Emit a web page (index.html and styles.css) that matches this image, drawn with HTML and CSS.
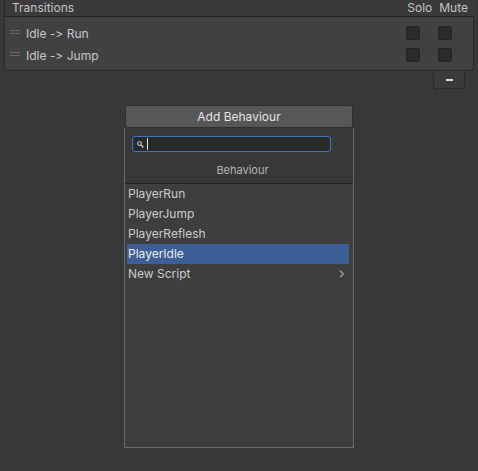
FILE: index.html
```html
<!DOCTYPE html>
<html>
<head>
<meta charset="utf-8">
<link rel="stylesheet" href="styles.css">
</head>
<body>
<div class="transitions">
  <div class="t-header">
    <span class="t-title">Transitions</span>
    <span class="t-cols"><span class="c-solo">Solo</span><span class="c-mute">Mute</span></span>
  </div>
  <div class="t-body">
    <div class="t-row">
      <span class="handle"></span>
      <span class="t-label">Idle -&gt; Run</span>
      <span class="chk"></span><span class="chk"></span>
    </div>
    <div class="t-row">
      <span class="handle"></span>
      <span class="t-label">Idle -&gt; Jump</span>
      <span class="chk"></span><span class="chk"></span>
    </div>
  </div>
  <div class="t-foot">
    <div class="minus-tab"><span class="minus"></span></div>
  </div>
</div>

<div class="add-area">
  <div class="add-btn">Add Behaviour</div>
  <div class="popup">
    <div class="popup-head">
      <div class="search">
        <svg class="mag" width="7" height="7" viewBox="0 0 7 7"><circle cx="2.6" cy="2.6" r="1.9" fill="none" stroke="#c8c8c8" stroke-width="1.1"/><path d="M4 4 L6.4 6.4" stroke="#c8c8c8" stroke-width="1.4"/></svg>
        <span class="caret"></span>
      </div>
      <div class="popup-title">Behaviour</div>
    </div>
    <div class="popup-list">
      <div class="item">PlayerRun</div>
      <div class="item">PlayerJump</div>
      <div class="item">PlayerReflesh</div>
      <div class="item selected">PlayerIdle</div>
      <div class="item sub">New Script<svg class="arrow" width="6" height="8" viewBox="0 0 6 8"><path d="M1 0.8 L4.4 4 L1 7.2" fill="none" stroke="#9a9a9a" stroke-width="1.4"/></svg></div>
    </div>
  </div>
</div>
</body>
</html>
```

FILE: styles.css
```css
html, body {
  margin: 0;
  padding: 0;
  background: #383838;
  font-family: Inter, "Noto Sans", "Liberation Sans", sans-serif;
  font-size: 12px;
  color: #d2d2d2;
  font-feature-settings: "calt" 0, "liga" 0;
  font-variant-ligatures: none;
}
.transitions {
  margin: 0 4px 0 4px;
  width: 470px;
}
.t-header {
  height: 16px;
  border-left: 1px solid #2a2a2a;
  border-bottom: 1px solid #232323;
  display: flex;
  align-items: center;
  justify-content: space-between;
  padding: 0 6px 0 7px;
  background: #3a3a3a;
  box-sizing: content-box;
}
.t-title { color: #c4c4c4; line-height: 16px; }
.t-cols { display: flex; gap: 7px; color: #c4c4c4; line-height: 16px; }
.t-body {
  background: #414141;
  border: 1px solid #2a2a2a;
  border-top: none;
  border-radius: 0 0 3px 3px;
  padding-top: 5px;
  box-sizing: border-box;
  height: 54px;
}
.t-row {
  height: 22px;
  display: flex;
  align-items: center;
  padding-left: 5px;
}
.handle {
  width: 10px;
  height: 4px;
  border-top: 1px solid #6a6a6a;
  border-bottom: 1px solid #6a6a6a;
  box-sizing: border-box;
  margin-top: -3px;
}
.t-label {
  margin-left: 6px;
  flex: 1;
  color: #c8c8c8;
}
.chk {
  width: 14px;
  height: 14px;
  box-sizing: border-box;
  background: #2b2b2b;
  border: 1px solid #212121;
  border-radius: 2px;
  margin-right: 18px;
}
.chk + .chk { margin-right: 21px; }
.t-foot {
  display: flex;
  justify-content: flex-end;
  padding-right: 9px;
}
.minus-tab {
  width: 32px;
  height: 18px;
  box-sizing: border-box;
  background: #3b3b3b;
  border: 1px solid #2a2a2a;
  border-top: none;
  border-radius: 0 0 3px 3px;
  display: flex;
  justify-content: center;
  align-items: center;
}
.minus {
  width: 7px;
  height: 2px;
  background: #dcdcdc;
}
.add-area {
  margin: 16px 0 0 124px;
  width: 230px;
  display: flex;
  flex-direction: column;
  align-items: center;
}
.add-btn {
  width: 228px;
  height: 23px;
  background: #575757;
  border: 1px solid #2f2f2f;
  border-radius: 3px;
  box-sizing: border-box;
  display: flex;
  align-items: center;
  justify-content: center;
  color: #e4e4e4;
  font-size: 12px;
}
.popup {
  width: 230px;
  height: 320px;
  box-sizing: border-box;
  border: 1px solid #6a6a6a;
  border-top: none;
  background: #3e3e3e;
  display: flex;
  flex-direction: column;
}
.popup-head {
  height: 56px;
  background: #383838;
  border-bottom: 1px solid #232323;
  display: flex;
  flex-direction: column;
  align-items: flex-start;
  box-sizing: border-box;
  padding: 8px 0 0 7px;
}
.search {
  width: 199px;
  height: 16px;
  box-sizing: border-box;
  border: 1px solid #3a78c4;
  border-radius: 3px;
  background: #2a2a2a;
  display: flex;
  align-items: center;
  padding-left: 4px;
}
.mag { display: block; }
.caret {
  width: 1px;
  height: 12px;
  background: #e0e0e0;
  margin-left: 3px;
}
.popup-title {
  align-self: center;
  margin-top: 10px;
  font-size: 11px;
  color: #b4b4b4;
  line-height: 16px;
}
.popup-list {
  flex: 1;
  padding: 0 4px 0 2px;
}
.item {
  height: 20px;
  line-height: 20px;
  padding-left: 1px;
  color: #cccccc;
  display: flex;
  align-items: center;
}
.item.selected {
  background: #3e5f96;
  color: #ececec;
}
.item.sub { justify-content: space-between; padding-right: 4px; }
.arrow { display: block; }
```
